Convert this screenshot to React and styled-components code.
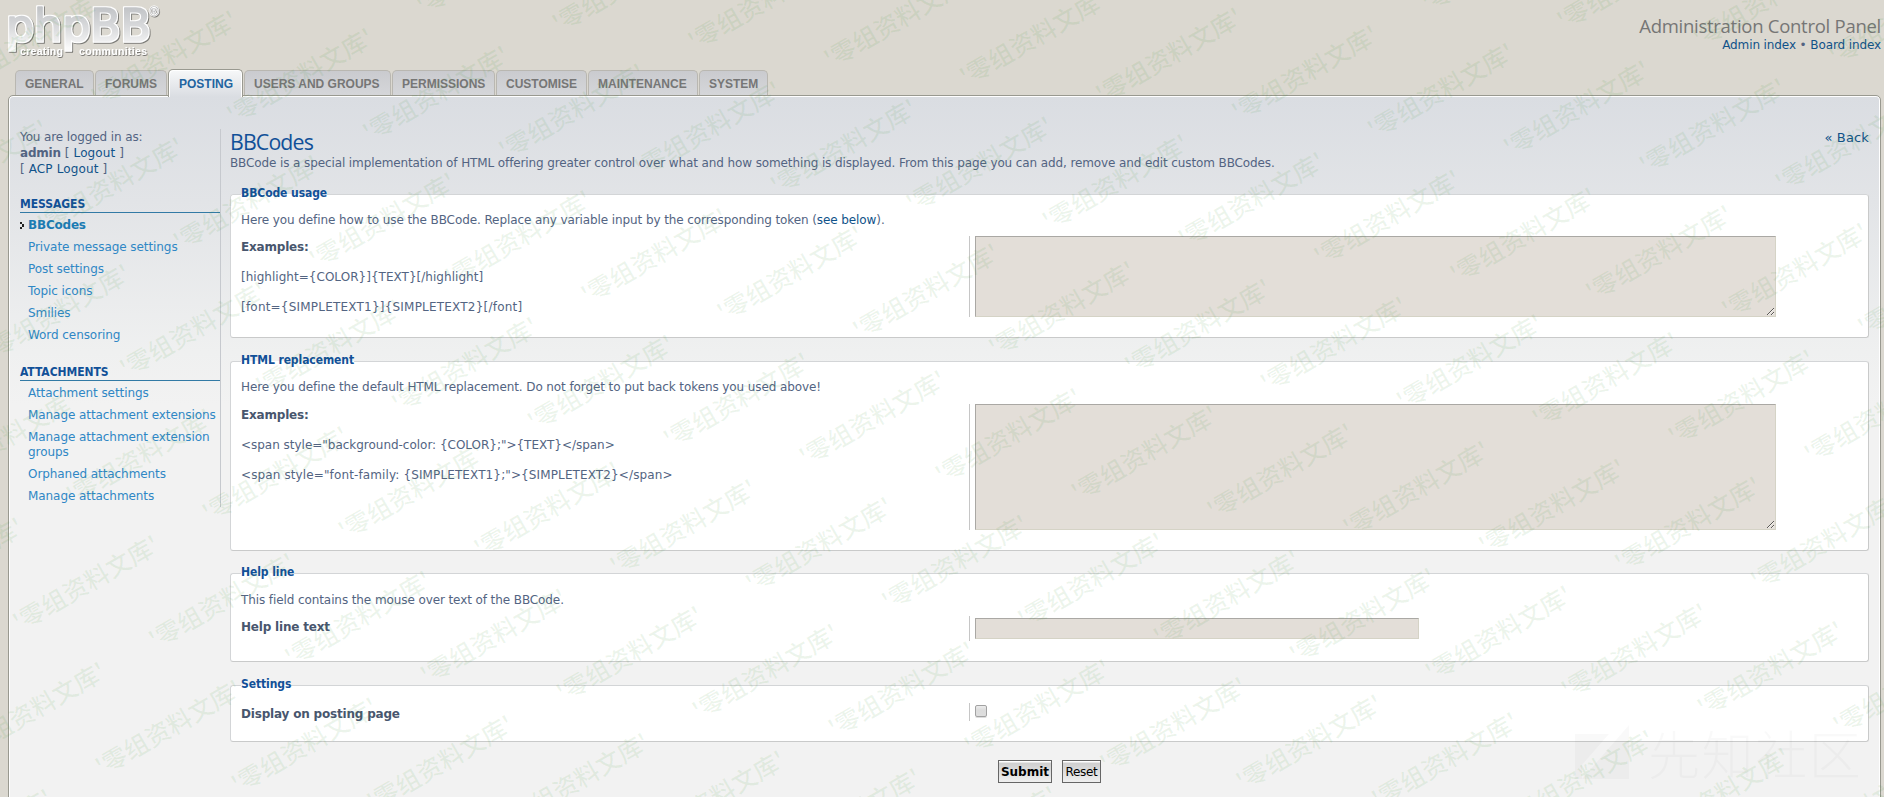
import React from "react";
import styled, { createGlobalStyle, css } from "styled-components";

const Global = createGlobalStyle`
  * { box-sizing: border-box; }
  html, body { margin: 0; padding: 0; }
  body {
    background: #dbd8d0;
    color: #536482;
    font-family: "DejaVu Sans", Verdana, sans-serif;
    font-size: 12px;
    line-height: 16px;
    letter-spacing: -0.11px;
  }
  p, h1, h2, ul, dl, dt, dd { margin: 0; padding: 0; }
  a { color: #105289; text-decoration: none; }
`;

const condensed = css`
  font-family: "DejaVu Sans Condensed", Tahoma, sans-serif;
`;

const Page = styled.div`
  position: relative;
  display: flex;
  flex-direction: column;
  height: 797px;
  overflow: hidden;
  padding: 0 3px 0 8px;
`;

const Header = styled.header`
  display: flex;
  justify-content: space-between;
  flex: none;
  height: 69px;
`;

const HeaderLinks = styled.div`
  padding-top: 14px;
  text-align: right;
`;

const PanelTitle = styled.div`
  height: 23px;
  font: 18.5px/24px "Open Sans", "Trebuchet MS", sans-serif;
  letter-spacing: -0.27px;
  color: #767676;
`;

const Tabs = styled.nav`
  display: flex;
  align-items: flex-end;
  flex: none;
  gap: 1px;
  height: 26px;
  padding-left: 7px;
`;

const Tab = styled.a`
  flex: none;
  width: ${(p) => p.$w}px;
  height: 25px;
  padding-left: 9px;
  border: 1px solid #b9b7b1;
  border-bottom: 0;
  border-radius: 5px 5px 0 0;
  background: linear-gradient(#cacbcf, #d5d6d9);
  color: #767676;
  font: bold 12px/26px "Liberation Sans", Arial, sans-serif;
  letter-spacing: 0;
  white-space: nowrap;
  ${(p) =>
    p.$active &&
    css`
      position: relative;
      z-index: 1;
      height: 28px;
      margin-bottom: -2px;
      padding-left: 10px;
      border-color: #999990;
      background: linear-gradient(#f7f8f9, #dadde2);
      box-shadow: inset 1px 1px 0 #fff, inset -1px 0 0 #fff;
      color: #23649f;
      line-height: 28px;
    `}
`;

const Panel = styled.div`
  display: flex;
  align-items: flex-start;
  flex: none;
  height: 760px;
  padding: 33px 11px 0;
  border: 1px solid #999990;
  border-radius: 5px;
  background: linear-gradient(#dadde2, #e2e4e7 105px, #eff0f0 255px, #f2f2f2 310px);
  box-shadow: inset 0 0 0 1px #fff;
`;

const Sidebar = styled.aside`
  flex: none;
  width: 201px;
  padding-bottom: 1px;
  border-right: 1px solid #c6c9ce;
`;

const Session = styled.span`
  letter-spacing: 0.12px;
  strong { letter-spacing: -0.2px; }
`;

const MenuHeading = styled.h2`
  ${condensed}
  margin-top: 19px;
  border-bottom: 1px solid #327aa5;
  color: #115098;
  font-size: 12px;
  line-height: 16px;
  letter-spacing: -0.05px;
`;

const MenuList = styled.ul`
  list-style: none;
`;

const MenuItem = styled.li`
  display: flex;
  padding: 5px 0 2px;
  line-height: 15px;
  font-weight: ${(p) => (p.$active ? "bold" : "normal")};
  letter-spacing: ${(p) => (p.$active ? -0.2 : -0.07)}px;
  a {
    padding-left: ${(p) => (p.$active ? 4 : 8)}px;
    color: ${(p) => (p.$active ? "#1b7bb3" : "#2f87c5")};
  }
  svg {
    flex: none;
    margin-top: 4px;
  }
`;

const Main = styled.main`
  flex: 1;
  min-width: 0;
  margin-left: 9px;
`;

const Heading = styled.div`
  display: flex;
  justify-content: space-between;
  height: 26px;
`;

const Title = styled.h1`
  color: #115098;
  font: 21.3px/25px "Open Sans", "Trebuchet MS", sans-serif;
  letter-spacing: -0.85px;
`;

const Back = styled.a`
  padding-top: 1px;
  font-size: 13px;
  letter-spacing: 0.15px;
`;

const Intro = styled.p`
  margin-bottom: 15px;
`;

const Group = styled.fieldset`
  margin: 0 0 ${(p) => p.$after ?? 15}px;
  padding: ${(p) => p.$top ?? 9}px 10px 20px;
  border: 1px solid #d3d5d7;
  border-right-color: #c9caca;
  border-bottom-color: #c9caca;
  border-radius: 3px;
  background: #fff;
  letter-spacing: -0.095px;
`;

const Legend = styled.legend`
  ${condensed}
  padding: 0 0 3px;
  color: #115098;
  font-weight: bold;
  line-height: 14px;
  letter-spacing: -0.08px;
`;

const Field = styled.dl`
  display: flex;
  margin-top: ${(p) => p.$gap ?? 8}px;
`;

const Label = styled.dt`
  flex: none;
  width: 728px;
  padding-top: 3px;
  height: 0;
  strong {
    color: #48566e;
    letter-spacing: -0.19px;
  }
`;

const Sample = styled.p`
  margin-top: 14px;
  letter-spacing: ${(p) => p.$ls}px;
`;

const Control = styled.dd`
  flex: 1;
  display: flex;
  align-items: ${(p) => (p.$center ? "center" : "flex-start")};
  height: ${(p) => p.$h}px;
  padding-left: 5px;
  border-left: 1px solid #c6c6c6;
`;

const inset = css`
  margin: 0;
  border: 1px solid #d5d3c6;
  border-top-color: #aaa8a4;
  border-left-color: #aaa8a4;
  border-radius: 0;
  background: #e3ded8;
  outline: 0;
`;

const TextArea = styled.textarea`
  ${inset}
  width: 801px;
  height: 100%;
  resize: both;
`;

const TextInput = styled.input`
  ${inset}
  width: 444px;
  height: 21px;
`;

const Checkbox = styled.input`
  appearance: none;
  width: 12px;
  height: 12px;
  margin: 2px 0 0;
  border: 1px solid #a2a2a2;
  border-radius: 2px;
  background: linear-gradient(#ececec, #dcdcdc 40%, #dedede);
  box-shadow: 0 1px 0 #ddd;
`;

const Actions = styled.div`
  display: flex;
  justify-content: center;
  gap: 10px;
  padding-top: 3px;
`;

const Button = styled.button`
  width: ${(p) => p.$w}px;
  height: 23px;
  padding: 0;
  border: 1px solid #666;
  border-radius: 0;
  background: linear-gradient(#fff 1px, #cfcfcf 2px, #efefef);
  color: #000;
  font-family: inherit;
  font-size: 12px;
  font-weight: ${(p) => (p.$primary ? "bold" : "normal")};
  letter-spacing: ${(p) => (p.$primary ? 0 : -0.3)}px;
`;

const Overlay = styled.svg`
  position: absolute;
  inset: 0;
  z-index: 5;
  pointer-events: none;
  letter-spacing: 0;
`;

const LogoSvg = styled.svg`
  display: block;
  margin-left: -8px;
  letter-spacing: 0;
`;

function Logo() {
  return (
    <LogoSvg width="170" height="64" viewBox="0 0 170 64" role="img" aria-label="phpBB creating communities">
      <defs>
        <linearGradient id="metal" gradientUnits="userSpaceOnUse" x1="0" y1="7" x2="0" y2="48">
          <stop offset="0" stopColor="#c1c3c6" />
          <stop offset="0.55" stopColor="#dcdddf" />
          <stop offset="1" stopColor="#fafafa" />
        </linearGradient>
        <filter id="rim" x="-5%" y="-15%" width="110%" height="135%">
          <feMorphology in="SourceAlpha" operator="dilate" radius="1" result="fat" />
          <feFlood floodColor="#fff" />
          <feComposite in2="fat" operator="in" result="white" />
          <feGaussianBlur in="fat" stdDeviation="0.5" />
          <feOffset dx="0.5" dy="1.1" result="cast" />
          <feFlood floodColor="#7c7b77" />
          <feComposite in2="cast" operator="in" result="shade" />
          <feMerge>
            <feMergeNode in="shade" />
            <feMergeNode in="white" />
            <feMergeNode in="SourceGraphic" />
          </feMerge>
        </filter>
        <filter id="cast" x="-5%" y="-20%" width="110%" height="150%">
          <feDropShadow dx="0.7" dy="1" stdDeviation="0.5" floodColor="#6d6c68" floodOpacity="0.9" />
        </filter>
      </defs>
      <g filter="url(#rim)">
        <text
          x="6" y="41.3" fontFamily="DejaVu Sans" fontSize="44" fill="url(#metal)" stroke="url(#metal)"
          strokeWidth="1.7" strokeLinejoin="round" textLength="145" lengthAdjust="spacingAndGlyphs"
        >
          phpBB
        </text>
      </g>
      <g filter="url(#cast)" fill="#fff" fontFamily="Liberation Sans">
        <text x="149.5" y="16" fontSize="12.5" fill="#b3b4b5" stroke="#fff" strokeWidth="1.2" paintOrder="stroke">
          ®
        </text>
        <text x="20" y="54.5" textLength="43" fontWeight="bold" fontSize="10.5">creating</text>
        <text x="79" y="54.5" textLength="68" fontWeight="bold" fontSize="10.5">communities</text>
      </g>
    </LogoSvg>
  );
}

function Arrow() {
  return (
    <svg width="4" height="7" viewBox="0 0 4 7" shapeRendering="crispEdges" fill="#222">
      <path d="M0 0h2v2H0zM2 2h2v3H2zM0 5h2v2H0z" />
    </svg>
  );
}

const STAMPS = [];
for (let i = -6; i < 17; i++) {
  for (let j = -5; j < 9; j++) {
    const x = 551.7 + 135.9 * i - 53.5 * j;
    const y = 21.7 + 17.7 * i + 126.8 * j;
    if (x > -140 && x < 1884 && y > -12 && y < 876) STAMPS.push([x, y]);
  }
}

function Watermarks() {
  return (
    <Overlay width="1884" height="797" aria-hidden="true">
      <g fill="#37922f" fillOpacity="0.09" fontFamily="Noto Sans CJK SC" fontWeight="500" fontSize="24.6">
        {STAMPS.map(([x, y]) => (
          <text key={`${x}-${y}`} x="0.5" y="14" letterSpacing="0.2" transform={`translate(${x} ${y}) rotate(-30)`}>
            '零组资料文库'
          </text>
        ))}
      </g>
      <g fill="#000" fillOpacity="0.022">
        <path d="M1575 734h34l-27 31v14h-7zM1629 725v54h-47z" />
        <text x="1648" y="775" fontFamily="Noto Sans CJK SC" fontWeight="300" fontSize="52" letterSpacing="1.6">
          先知社区
        </text>
      </g>
    </Overlay>
  );
}

const TABS = [
  ["GENERAL", 79],
  ["FORUMS", 72],
  ["POSTING", 75],
  ["USERS AND GROUPS", 147],
  ["PERMISSIONS", 103],
  ["CUSTOMISE", 91],
  ["MAINTENANCE", 110],
  ["SYSTEM", 69],
];

const MENUS = [
  {
    title: "MESSAGES",
    items: ["BBCodes", "Private message settings", "Post settings", "Topic icons", "Smilies", "Word censoring"],
  },
  {
    title: "ATTACHMENTS",
    items: [
      "Attachment settings",
      "Manage attachment extensions",
      "Manage attachment extension groups",
      "Orphaned attachments",
      "Manage attachments",
    ],
  },
];

export default function App() {
  return (
    <Page>
      <Global />
      <Header>
        <Logo />
        <HeaderLinks>
          <PanelTitle>Administration Control Panel</PanelTitle>
          <a href="#admin">Admin index</a> • <a href="#board">Board index</a>
        </HeaderLinks>
      </Header>
      <Tabs>
        {TABS.map(([name, w]) => (
          <Tab key={name} $w={w} $active={name === "POSTING"}>
            {name}
          </Tab>
        ))}
      </Tabs>
      <Panel>
        <Sidebar>
          <p>
            You are logged in as:
            <br />
            <Session>
              <strong>admin</strong> [ <a href="#logout">Logout</a> ]
              <br />[ <a href="#acp-logout">ACP Logout</a> ]
            </Session>
          </p>
          {MENUS.map((menu) => (
            <React.Fragment key={menu.title}>
              <MenuHeading>{menu.title}</MenuHeading>
              <MenuList>
                {menu.items.map((name) => (
                  <MenuItem key={name} $active={name === "BBCodes"}>
                    {name === "BBCodes" && <Arrow />}
                    <a href="#menu">{name}</a>
                  </MenuItem>
                ))}
              </MenuList>
            </React.Fragment>
          ))}
        </Sidebar>
        <Main>
          <Heading>
            <Title>BBCodes</Title>
            <Back href="#back">« Back</Back>
          </Heading>
          <Intro>
            BBCode is a special implementation of HTML offering greater control over what and how something is
            displayed. From this page you can add, remove and edit custom BBCodes.
          </Intro>

          <Group>
            <Legend>BBCode usage</Legend>
            <p>
              Here you define how to use the BBCode. Replace any variable input by the corresponding token (
              <a href="#tokens">see below</a>).
            </p>
            <Field>
              <Label>
                <strong>Examples:</strong>
                <Sample $ls={0.03}>{"[highlight={COLOR}]{TEXT}[/highlight]"}</Sample>
                <Sample $ls={0.21}>{"[font={SIMPLETEXT1}]{SIMPLETEXT2}[/font]"}</Sample>
              </Label>
              <Control $h={81}>
                <TextArea />
              </Control>
            </Field>
          </Group>

          <Group $after={14}>
            <Legend>HTML replacement</Legend>
            <p>Here you define the default HTML replacement. Do not forget to put back tokens you used above!</p>
            <Field $gap={9}>
              <Label>
                <strong>Examples:</strong>
                <Sample $ls={-0.02}>{'<span style="background-color: {COLOR};">{TEXT}</span>'}</Sample>
                <Sample $ls={0.12}>{'<span style="font-family: {SIMPLETEXT1};">{SIMPLETEXT2}</span>'}</Sample>
              </Label>
              <Control $h={126}>
                <TextArea />
              </Control>
            </Field>
          </Group>

          <Group $top={10}>
            <Legend>Help line</Legend>
            <p>This field contains the mouse over text of the BBCode.</p>
            <Field>
              <Label>
                <strong>Help line text</strong>
              </Label>
              <Control $h={25} $center>
                <TextInput type="text" />
              </Control>
            </Field>
          </Group>

          <Group>
            <Legend>Settings</Legend>
            <Field $gap={0}>
              <Label>
                <strong>Display on posting page</strong>
              </Label>
              <Control $h={18}>
                <Checkbox type="checkbox" />
              </Control>
            </Field>
          </Group>

          <Actions>
            <Button $w={54} $primary>
              Submit
            </Button>
            <Button $w={39}>Reset</Button>
          </Actions>
        </Main>
      </Panel>
      <Watermarks />
    </Page>
  );
}
